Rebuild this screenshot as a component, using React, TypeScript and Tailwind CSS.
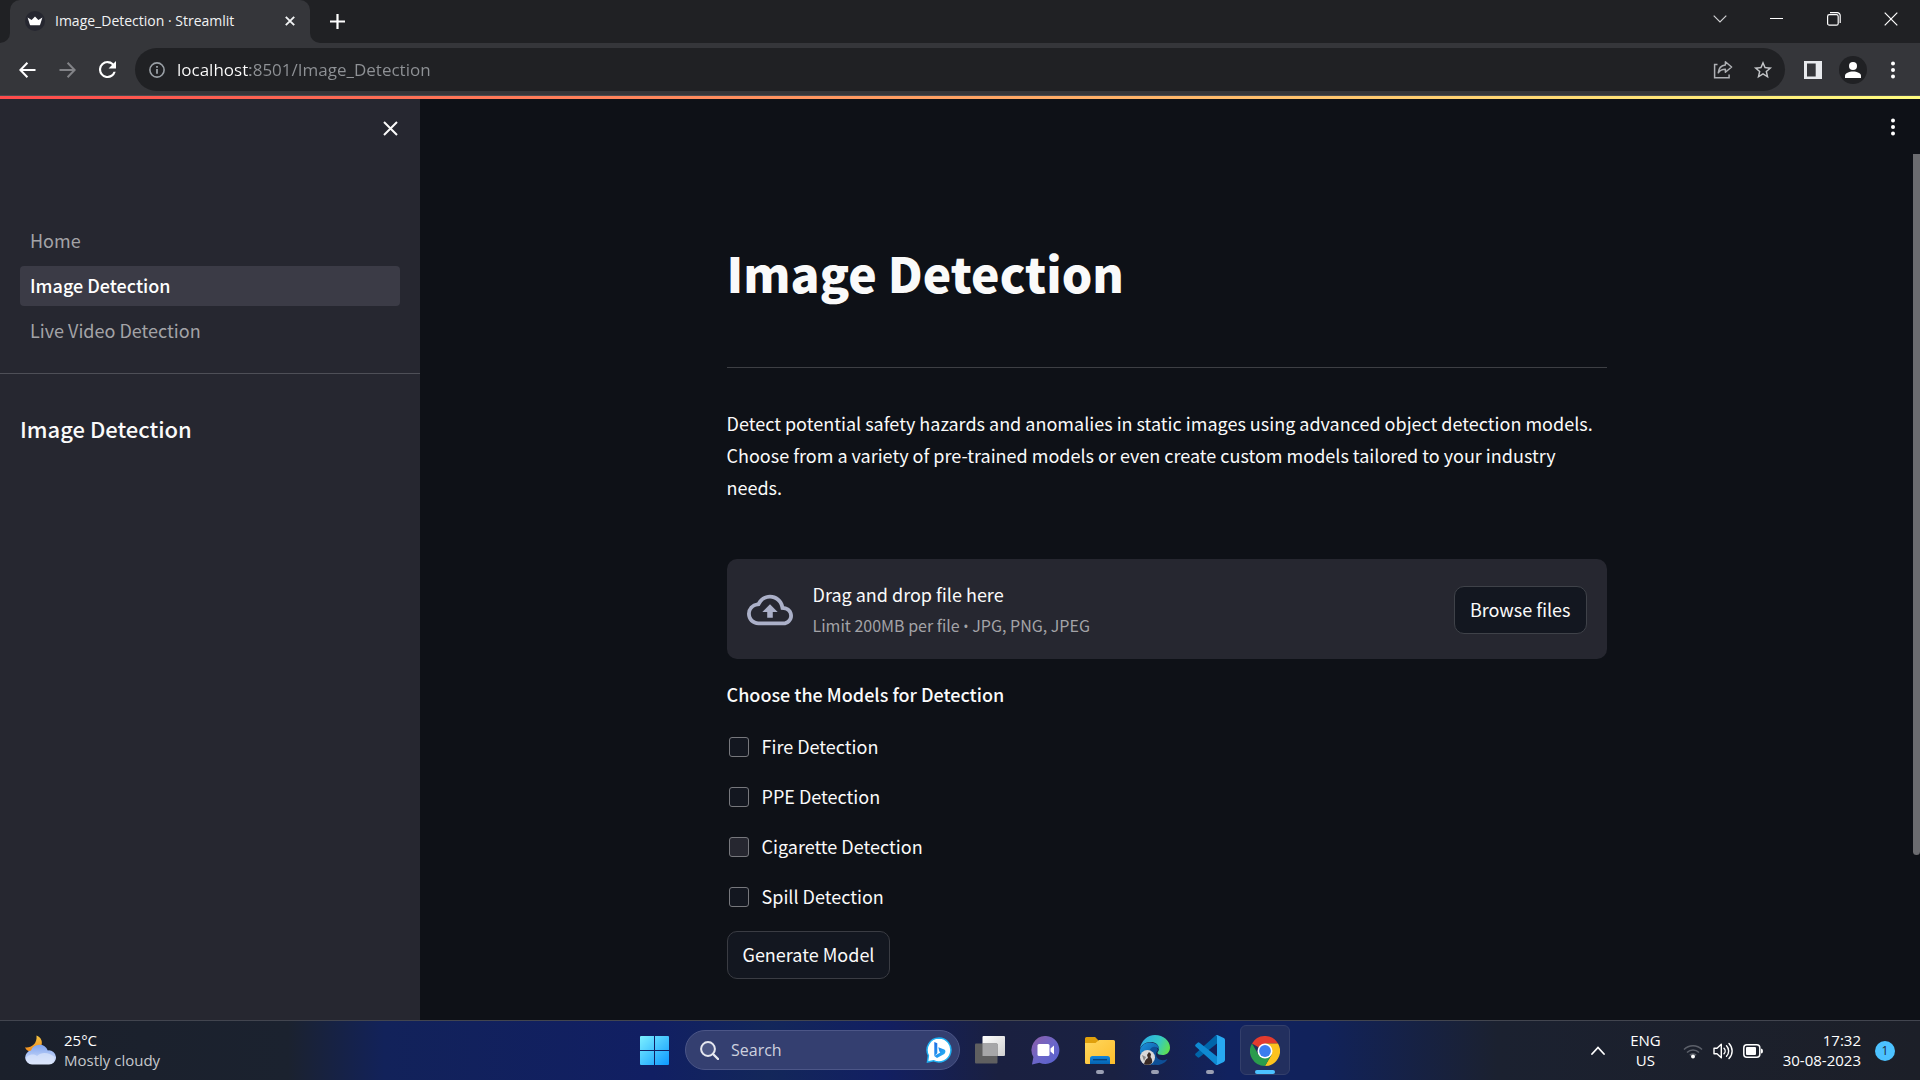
import type { ReactNode } from "react";

const PAGE_FONT = "font-['Noto_Sans_CJK_SC',sans-serif]";
const SYSTEM_FONT = "font-['Open_Sans',sans-serif]";

function Icon({ className, children, viewBox = "0 0 24 24" }: { className: string; children: ReactNode; viewBox?: string }) {
  return (
    <svg viewBox={viewBox} className={className} fill="none" aria-hidden="true">
      {children}
    </svg>
  );
}

function IconButton({ label, className, children }: { label: string; className: string; children: ReactNode }) {
  return (
    <button type="button" aria-label={label} className={`flex shrink-0 items-center justify-center ${className}`}>
      {children}
    </button>
  );
}

function DotsIcon() {
  return (
    <Icon className="h-[18px] w-1" viewBox="0 0 4 18">
      <circle cx="2" cy="2.5" r="2" fill="#fff" />
      <circle cx="2" cy="9" r="2" fill="#fff" />
      <circle cx="2" cy="15.5" r="2" fill="#fff" />
    </Icon>
  );
}

function TabStrip() {
  return (
    <header className="flex h-[43px] shrink-0 items-stretch bg-[#202124] text-[#f1f3f4]">
      <div className="flex w-[10px] items-end bg-[#35363a]">
        <div className="h-full w-full rounded-br-[10px] bg-[#202124]" />
      </div>
      <div className="bg-[#202124]">
        <div className="flex h-full w-[300px] items-center rounded-t-[10px] bg-[#35363a] pr-[10px] pb-px pl-[15px]">
          <Icon className="size-5 shrink-0" viewBox="0 0 20 20">
            <circle cx="10" cy="10" r="10" fill="#262730" />
            <path d="M2.6 6.6 6.6 9 10 5.4 13.4 9l4-2.4-2.2 6.8q-.3.9-1.2.9H6q-.9 0-1.2-.9z" fill="#fff" />
          </Icon>
          <span className="ml-[10px] flex-1 text-[14px] leading-5 whitespace-nowrap">Image_Detection · Streamlit</span>
          <IconButton label="Close tab" className="size-5">
            <Icon className="size-[10px]" viewBox="0 0 10 10">
              <path d="m.8.8 8.4 8.4m0-8.4L.8 9.2" stroke="#f1f3f4" strokeWidth="1.9" />
            </Icon>
          </IconButton>
        </div>
      </div>
      <div className="flex w-[10px] items-end bg-[#35363a]">
        <div className="h-full w-full rounded-bl-[10px] bg-[#202124]" />
      </div>
      <IconButton label="New tab" className="w-[35px]">
        <Icon className="size-[15px]" viewBox="0 0 15 15">
          <path d="M7.5 0v15M0 7.5h15" stroke="#fff" strokeWidth="2.2" />
        </Icon>
      </IconButton>
      <div className="flex-1" />
      <div className="flex h-[37px]">
        <IconButton label="Search tabs" className="w-[57px]">
          <Icon className="h-2 w-[14px]" viewBox="0 0 14 8">
            <path d="m.7.7 6.3 6.3L13.3.7" stroke="#d0d1d3" strokeWidth="1.2" />
          </Icon>
        </IconButton>
        <IconButton label="Minimize" className="w-[57px]">
          <span className="h-px w-[13px] bg-white" />
        </IconButton>
        <IconButton label="Restore" className="w-[57px]">
          <Icon className="size-[14px]" viewBox="0 0 14 14">
            <rect x=".6" y="2.6" width="10.6" height="10.6" rx="1.8" stroke="#fff" strokeWidth="1.2" />
            <path d="M3 .6h7.2a3 3 0 0 1 3 3V11" stroke="#fff" strokeWidth="1.2" />
          </Icon>
        </IconButton>
        <IconButton label="Close window" className="w-[58px]">
          <Icon className="size-[14px]" viewBox="0 0 14 14">
            <path d="m.7.7 12.6 12.6m0-12.6L.7 13.3" stroke="#fff" strokeWidth="1.2" />
          </Icon>
        </IconButton>
      </div>
    </header>
  );
}

function Toolbar() {
  return (
    <div className="flex h-[53px] shrink-0 items-center border-b border-[#4a4b4f] bg-[#35363a] pt-px pr-[7px] pl-[7px]">
      <IconButton label="Back" className="size-10">
        <Icon className="h-4 w-[17px]" viewBox="0 0 17 16">
          <path d="M16.5 8H1.6M8.4.8 1.4 8l7 7.2" stroke="#fff" strokeWidth="2" />
        </Icon>
      </IconButton>
      <IconButton label="Forward" className="size-10">
        <Icon className="h-4 w-[17px]" viewBox="0 0 17 16">
          <path d="M.5 8h14.9M8.6.8l7 7.2-7 7.2" stroke="#828387" strokeWidth="2" />
        </Icon>
      </IconButton>
      <IconButton label="Reload" className="size-10">
        <Icon className="size-[17px]" viewBox="4 4 16 16">
          <path
            d="M17.65 6.35A7.96 7.96 0 0 0 12 4a8 8 0 1 0 7.73 10h-2.08A6 6 0 1 1 12 6c1.66 0 3.14.69 4.22 1.78L13 11h7V4z"
            fill="#fff"
          />
        </Icon>
      </IconButton>
      <div className="ml-2 flex h-[43px] flex-1 items-center rounded-full bg-[#202124] pr-[2px] pl-[14px]">
        <Icon className="size-4 shrink-0" viewBox="0 0 16 16">
          <circle cx="8" cy="8" r="7.1" stroke="#9aa0a6" strokeWidth="1.6" />
          <path d="M8 7v4.8M8 4v1.8" stroke="#9aa0a6" strokeWidth="1.8" />
        </Icon>
        <input
          type="text"
          aria-label="Address"
          defaultValue="localhost:8501/Image_Detection"
          className="ml-3 min-w-0 flex-1 bg-[linear-gradient(to_right,#ffffff_73px,#8f9296_73px)] bg-clip-text text-[17px] leading-6 text-transparent outline-none"
        />
        <IconButton label="Share this page" className="size-10">
          <Icon className="size-5" viewBox="0 0 20 20">
            <path d="M4.5 4.5H1.6v13.3h14.5v-3.2" stroke="#aeb0b4" strokeWidth="1.5" />
            <path d="M12.4 1.8 18.6 7l-6.2 5.3V9.2c-3.4 0-5.6 1.2-7.1 3.6.3-4.6 2.7-7.4 7.1-7.9z" stroke="#aeb0b4" strokeWidth="1.5" strokeLinejoin="round" />
          </Icon>
        </IconButton>
        <IconButton label="Bookmark this tab" className="size-10">
          <Icon className="size-5" viewBox="1 1 22 22">
            <path
              d="m22 9.24-7.19-.62L12 2 9.19 8.63 2 9.24l5.46 4.73L5.82 21 12 17.27 18.18 21l-1.63-7.03zM12 15.4l-3.76 2.27 1-4.28-3.32-2.88 4.38-.38L12 6.1l1.71 4.04 4.38.38-3.32 2.88 1 4.28z"
              fill="#c3c5c8"
            />
          </Icon>
        </IconButton>
      </div>
      <IconButton label="Side panel" className="ml-2 size-10">
        <Icon className="size-[18px]" viewBox="0 0 18 18">
          <path d="M0 0h18v18H0zm3 2.6v12.8h8.7V2.6z" fill="#e8eaed" fillRule="evenodd" />
        </Icon>
      </IconButton>
      <IconButton label="Profile" className="size-10">
        <Icon className="size-7" viewBox="0 0 28 28">
          <circle cx="14" cy="14" r="14" fill="#202124" />
          <circle cx="14" cy="10" r="4" fill="#fff" />
          <path d="M6 22v-2.200C6 17.200 10 15.600 14 15.600s8 1.600 8 4.200V22z" fill="#fff" />
        </Icon>
      </IconButton>
      <IconButton label="Browser menu" className="size-10">
        <DotsIcon />
      </IconButton>
    </div>
  );
}

const NAV = [
  { label: "Home", active: false },
  { label: "Image Detection", active: true },
  { label: "Live Video Detection", active: false },
];

function Sidebar() {
  return (
    <aside className="w-[420px] shrink-0 bg-[#262730]">
      <div className="flex justify-end pt-[9px] pr-[10px]">
        <IconButton label="Close sidebar" className="size-10">
          <Icon className="size-[15px]" viewBox="0 0 15 15">
            <path d="m1 1 13 13M14 1 1 14" stroke="#fafafa" strokeWidth="2" />
          </Icon>
        </IconButton>
      </div>
      <nav className="mt-[73px] flex flex-col gap-[5px] border-b border-[#4e4f57] px-5 pb-[22px]">
        {NAV.map((item) => (
          <a
            key={item.label}
            href="#"
            className={
              item.active
                ? "flex h-10 items-center rounded bg-[#3b3b46] px-[10px] pb-[2px] text-[18px] leading-8 font-medium text-white"
                : "flex h-10 items-center rounded px-[10px] pb-[2px] text-[18px] leading-8 text-[#a3a3a7]"
            }
          >
            {item.label}
          </a>
        ))}
      </nav>
      <h2 className="px-5 pt-[38px] text-[22px] leading-8 font-medium text-[#fafafa]">Image Detection</h2>
    </aside>
  );
}

const MODELS = [
  { id: "fire", label: "Fire Detection", hovered: false },
  { id: "ppe", label: "PPE Detection", hovered: false },
  { id: "cigarette", label: "Cigarette Detection", hovered: true },
  { id: "spill", label: "Spill Detection", hovered: false },
];

function Main() {
  return (
    <main className="mx-auto w-full max-w-[880px] text-[18px] leading-8 text-[#fafafa]">
      <h1 className="pt-[85px] text-[48px] leading-[66px] font-black">Image Detection</h1>
      <hr className="mt-[62px] border-[#3d3f44]" />
      <p className="mt-[39px]">
        Detect potential safety hazards and anomalies in static images using advanced object detection models. Choose
        from a variety of pre-trained models or even create custom models tailored to your industry needs.
      </p>
      <section aria-label="File upload" className="mt-[56px] flex items-center rounded-[10px] bg-[#262730] px-5 pt-[19px] pb-[18px]">
        <Icon className="size-[46px] shrink-0">
          <path
            d="M19.35 10.04A7.49 7.49 0 0 0 12 4C9.11 4 6.6 5.64 5.35 8.04A5.994 5.994 0 0 0 0 14c0 3.31 2.69 6 6 6h13c2.76 0 5-2.24 5-5 0-2.64-2.05-4.78-4.65-4.96zM19 18H6c-2.21 0-4-1.79-4-4 0-2.05 1.53-3.76 3.56-3.97l1.07-.11.5-.95A5.469 5.469 0 0 1 12 6c2.62 0 4.88 1.86 5.39 4.43l.3 1.5 1.53.11A2.98 2.98 0 0 1 22 15c0 1.65-1.35 3-3 3zM8 13h2.55v3h2.9v-3H16l-4-4z"
            fill="#abb0c8"
          />
        </Icon>
        <div className="ml-5 flex-1">
          <div className="leading-8">Drag and drop file here</div>
          <div className="mt-px text-[16px] leading-7 text-[#a3a3a7]">
            Limit 200MB per file<span className={`text-[14px] ${SYSTEM_FONT}`}> • </span>JPG, PNG, JPEG
          </div>
        </div>
        <button type="button" className="h-12 rounded-[10px] border border-[#3f4249] bg-[#131720] px-[15px] pb-px">
          Browse files
        </button>
      </section>
      <fieldset>
        <legend className="pt-[19px] font-medium">Choose the Models for Detection</legend>
        <div className="mt-[21px] flex flex-col gap-[18px]">
          {MODELS.map((model) => (
            <div key={model.id} className="flex items-center">
              <input
                type="checkbox"
                id={model.id}
                className={
                  model.hovered
                    ? "ml-[2px] size-5 appearance-none rounded-[3px] border border-[#77787d] bg-[#262730] checked:bg-[#ff4b4b]"
                    : "ml-[2px] size-5 appearance-none rounded-[3px] border border-[#77787d] bg-[#131720] checked:bg-[#ff4b4b]"
                }
              />
              <label htmlFor={model.id} className="pb-[2px] pl-[13px] leading-[30px]">
                {model.label}
              </label>
            </div>
          ))}
        </div>
      </fieldset>
      <button type="button" className="mt-[18px] h-12 rounded-[10px] border border-[#3a3c43] bg-[#131720] px-[15px] pb-[2px]">
        Generate Model
      </button>
    </main>
  );
}

function WeatherIcon() {
  return (
    <Icon className="h-[30px] w-8" viewBox="0 0 32 30">
      <defs>
        <linearGradient id="moon" x1="0" y1="0" x2="0" y2="1">
          <stop offset="0" stopColor="#f5c542" />
          <stop offset="1" stopColor="#f28a1d" />
        </linearGradient>
        <linearGradient id="cloud" x1="0" y1="0" x2="0" y2="1">
          <stop offset="0" stopColor="#7fa3ee" />
          <stop offset="1" stopColor="#dfe8fc" />
        </linearGradient>
      </defs>
      <path d="M12.5.5c4.500 1.500 6.500 6 4.800 10.500C15.500 16 10 18 5 16.300 3 15.600 1.700 14 1 12.300c5 1 12.500-2.500 11.500-11.800z" fill="url(#moon)" />
      <path d="M8 29.500a7 7 0 0 1-1-13.900 9 9 0 0 1 16.800-.2A7.100 7.100 0 1 1 24.500 29.500z" fill="url(#cloud)" />
      <path d="M8 28.500c-4 0-6-2.500-6-4.500 1-4 7-6 11-3 4-4 12-4 17.500 1 0 4-2.500 6.500-6 6.500z" fill="#dbe5fb" opacity=".7" />
    </Icon>
  );
}

function StartIcon() {
  return (
    <Icon className="size-[29px]" viewBox="0 0 29 29">
      <defs>
        <linearGradient id="start" x1="0" y1="0" x2="1" y2="1">
          <stop offset="0" stopColor="#7cf0ff" />
          <stop offset="1" stopColor="#0d99ff" />
        </linearGradient>
      </defs>
      <path d="M0 1a1 1 0 0 1 1-1h13v14H0zM15 0h13a1 1 0 0 1 1 1v13H15zM0 15h14v14H1a1 1 0 0 1-1-1zM15 15h14v13a1 1 0 0 1-1 1H15z" fill="url(#start)" />
    </Icon>
  );
}

function BingIcon() {
  return (
    <Icon className="size-[26px]" viewBox="0 0 26 26">
      <defs>
        <linearGradient id="bing" x1="0" y1="0" x2="1" y2="1">
          <stop offset="0" stopColor="#1e6be6" />
          <stop offset="1" stopColor="#26b8f5" />
        </linearGradient>
      </defs>
      <path d="M13 1a12 12 0 1 1-5.500 22.700L1.500 25l.9-6.500A12 12 0 0 1 13 1z" fill="#fff" stroke="#1fb0f2" strokeWidth="1.5" />
      <path d="m8.300 5 3 1.200v10l-3 2.800zM12.300 10.200l6 2.400c1.500.7 1.500 3.200 0 4.300L11 21l-2.700-2 6-3.500-1-1.200z" fill="url(#bing)" />
    </Icon>
  );
}

function TaskViewIcon() {
  return (
    <Icon className="h-7 w-[30px]" viewBox="0 0 30 28">
      <defs>
        <linearGradient id="task" x1="0" y1="0" x2="1" y2="1">
          <stop offset="0" stopColor="#fff" />
          <stop offset="1" stopColor="#cfcfcf" />
        </linearGradient>
      </defs>
      <rect x="7.5" y="0" width="22.5" height="20" rx="1" fill="url(#task)" />
      <rect x="0" y="7.5" width="22.5" height="20" rx="1" fill="#5f5f60" />
      <path d="M7.5 7.5h14a1 1 0 0 1 1 1V20h-15z" fill="#a6a6a8" />
    </Icon>
  );
}

function ChatIcon() {
  return (
    <Icon className="size-[29px]" viewBox="0 0 29 29">
      <defs>
        <linearGradient id="chat" x1="0" y1="0" x2="1" y2="1">
          <stop offset="0" stopColor="#8f5ca6" />
          <stop offset=".5" stopColor="#6c66c8" />
          <stop offset="1" stopColor="#5560cf" />
        </linearGradient>
      </defs>
      <path d="M15 0a14 14 0 1 1-6.500 26.700L1 28.500l1.400-7.500A14 14 0 0 1 15 0z" fill="url(#chat)" />
      <rect x="6.5" y="8" width="12" height="12" rx="1.5" fill="#fff" />
      <path d="m19.500 12.500 3.500-3v9l-3.500-3z" fill="#fff" />
    </Icon>
  );
}

function ExplorerIcon() {
  return (
    <Icon className="h-[27px] w-[30px]" viewBox="0 0 30 27">
      <defs>
        <linearGradient id="folder" x1="0" y1="0" x2="1" y2="1">
          <stop offset="0" stopColor="#ffd75e" />
          <stop offset="1" stopColor="#fdbd2b" />
        </linearGradient>
        <linearGradient id="tray" x1="0" y1="0" x2="0" y2="1">
          <stop offset="0" stopColor="#1286dc" />
          <stop offset="1" stopColor="#0463b0" />
        </linearGradient>
      </defs>
      <path d="M0 1.500A1.500 1.500 0 0 1 1.500 0h8.600l3.400 3.500V12H0z" fill="#e0a00c" />
      <path d="M0 6h10.500L14 3h14.500A1.500 1.500 0 0 1 30 4.500V27H1.500A1.500 1.500 0 0 1 0 25.500z" fill="url(#folder)" />
      <path d="M5 27v-5.500A2.500 2.500 0 0 1 7.500 19h15a2.500 2.500 0 0 1 2.500 2.500V27z" fill="url(#tray)" />
      <path d="M8 22.700h14" stroke="#06437c" strokeWidth="1.4" />
    </Icon>
  );
}

function EdgeIcon() {
  return (
    <Icon className="size-[30px]" viewBox="0 0 30 30">
      <defs>
        <linearGradient id="edge-top" x1="0" y1=".3" x2="1" y2=".6">
          <stop offset="0" stopColor="#2aa9e6" />
          <stop offset=".6" stopColor="#35c9c4" />
          <stop offset="1" stopColor="#5fe04f" />
        </linearGradient>
        <linearGradient id="edge-low" x1="0" y1="0" x2="1" y2="1">
          <stop offset="0" stopColor="#1a93dd" />
          <stop offset="1" stopColor="#0d4a93" />
        </linearGradient>
      </defs>
      <path d="M15 9c-5 0-8.500 4-8.500 9.500S11 30 17 30c4.500 0 8.500-2.500 10.500-6-6 3-11.500 0-11.500-5 0-2 1-3 2-4z" fill="#0e4f96" />
      <path d="M0 15c1-5 6-8 11-7.500 5 .3 8.500 3.500 8 7-3-4.500-8-3-9.500 1C8 20 10 26 15 30 6 30-.5 23 0 15z" fill="url(#edge-low)" />
      <path d="M0 14C.8 6 7.500 0 15 0c8.500 0 15 6 15 12.500 0 5-3.500 7.500-7.500 7.500-3 0-5-1-5-2.300 0-.9 1.500-1.700 1.500-4C19 9.500 15 7 11 7 5 7 1 10.500 0 14z" fill="url(#edge-top)" />
      <circle cx="7.5" cy="22.5" r="7.5" fill="#d9d9d9" />
      <path d="M4 29c1-3 1.500-5 4-6l-1-3 2-3 2 2-.5 3c1.500 1.500 2 4 1.500 6-2 2-5.500 2.500-8 1z" fill="#3a2a25" />
      <path d="m2 20 4 2-2 4z" fill="#8a8a8a" />
    </Icon>
  );
}

function CodeIcon() {
  return (
    <Icon className="size-[30px]" viewBox="0 0 30 30">
      <path d="M22 0v8.500L4.500 22.300q-1 .7-1.900-.1L.6 20.500q-.9-1 0-2L20.500.4z" fill="#0065a9" />
      <path d="M22 30v-8.500L4.500 7.700q-1-.7-1.900.1L.6 9.500q-.9 1 0 2l19.900 18.100z" fill="#0f8ad2" />
      <path d="M20.500.4Q21.300-.3 22.300.1l6.500 3q1.200.6 1.200 1.900v20q0 1.300-1.200 1.900l-6.500 3q-1 .4-1.800-.3 1.500.4 1.500-1.400V1.800q0-1.800-1.500-1.400z" fill="#28a8f0" />
    </Icon>
  );
}

function ChromeIcon() {
  return (
    <Icon className="size-[30px]" viewBox="0 0 30 30">
      <path d="M15 15 2 7.500A15 15 0 0 1 28 7.500H15z" fill="#e33b2e" />
      <path d="M15 7.500h13A15 15 0 0 1 15 30l6.500-11.300z" fill="#fcc31e" />
      <path d="M8.500 18.700 2 7.500A15 15 0 0 0 15 30l6.500-11.300z" fill="#2a9c4c" />
      <circle cx="15" cy="15" r="7.5" fill="#fff" />
      <circle cx="15" cy="15" r="5.9" fill="#3b7def" />
    </Icon>
  );
}

const APPS = [
  { label: "Task view", icon: <TaskViewIcon />, running: false },
  { label: "Chat", icon: <ChatIcon />, running: false },
  { label: "File Explorer", icon: <ExplorerIcon />, running: true },
  { label: "Microsoft Edge", icon: <EdgeIcon />, running: true },
  { label: "Visual Studio Code", icon: <CodeIcon />, running: true },
];

function Taskbar() {
  return (
    <footer
      className={`grid h-[60px] shrink-0 grid-cols-[1fr_auto_1fr] items-stretch border-t border-[#42454f] bg-[linear-gradient(to_right,#1b202b_0%,#1b222f_15%,#12225a_20%,#111f63_34%,#13275a_40%,#121f62_46%,#1a2040_52%,#1a2142_58%,#11225f_64%,#11225a_69%,#1b2130_78%,#1c1f28_100%)] text-white ${SYSTEM_FONT}`}
    >
      <button type="button" className="flex items-center gap-2 justify-self-start pb-[2px] pl-6 text-left text-[15px] leading-5">
        <WeatherIcon />
        <span className="flex flex-col">
          <span>25°C</span>
          <span className="text-[#c6c8cc]">Mostly cloudy</span>
        </span>
      </button>
      <div className="flex items-center pb-px pl-[9px]">
        <IconButton label="Start" className="mr-4 size-[30px]">
          <StartIcon />
        </IconButton>
        <div className="mr-[5px] flex h-10 w-[275px] items-center rounded-full border border-[#4c5687] bg-[#343f70] pr-[7px] pl-[14px]">
          <Icon className="size-[19px] shrink-0" viewBox="0 0 19 19">
            <circle cx="8" cy="8" r="6.9" stroke="#e6e8f0" strokeWidth="2" fill="#4b5684" />
            <path d="m13 13 5 5" stroke="#e6e8f0" strokeWidth="2.4" strokeLinecap="round" />
          </Icon>
          <input
            type="search"
            aria-label="Search"
            placeholder="Search"
            className="ml-3 min-w-0 flex-1 bg-transparent text-[16px] leading-6 outline-none placeholder:text-[#cdd1df]"
          />
          <BingIcon />
        </div>
        <div className="flex items-center gap-[5px]">
          {APPS.map((app) => (
            <button key={app.label} type="button" aria-label={app.label} className="flex h-[50px] w-[50px] flex-col items-center">
              <span className="flex h-[45px] items-center pt-[5px]">{app.icon}</span>
              {app.running && <span className="h-1 w-2 rounded-full bg-[#9a9fb3]" />}
            </button>
          ))}
          <button
            type="button"
            aria-label="Google Chrome"
            className="flex h-[50px] w-[50px] flex-col items-center rounded-md border border-[#333f6b] bg-[#222f5e]"
          >
            <span className="flex h-[44px] items-center pt-[5px]">
              <ChromeIcon />
            </span>
            <span className="h-1 w-5 rounded-full bg-[#4cc2ff]" />
          </button>
        </div>
      </div>
      <div className="flex items-center justify-end pr-[25px] text-[15px] leading-5">
        <IconButton label="Show hidden icons" className="size-7">
          <Icon className="h-[9px] w-[14px]" viewBox="0 0 14 9">
            <path d="m1 8 6-6.500L13 8" stroke="#fff" strokeWidth="1.8" strokeLinecap="round" />
          </Icon>
        </IconButton>
        <button type="button" className="ml-[18px] flex flex-col items-center pb-[2px]">
          <span>ENG</span>
          <span>US</span>
        </button>
        <button type="button" aria-label="Network, volume and battery" className="ml-[22px] flex items-center gap-[10px]">
          <Icon className="h-4 w-5" viewBox="0 0 20 16">
            <path d="M1 6.500a12.500 12.500 0 0 1 18 0M4 9.500a8.400 8.400 0 0 1 12 0M6.800 12.200a4.700 4.700 0 0 1 6.400 0" stroke="#5c606a" strokeWidth="1.5" />
            <circle cx="10" cy="13.5" r="2" fill="#fff" />
          </Icon>
          <Icon className="h-[18px] w-5" viewBox="0 0 20 18">
            <path d="M1 6.300v5.400h3l4.300 4V2.300l-4.300 4z" stroke="#fff" strokeWidth="1.4" strokeLinejoin="round" />
            <path d="M11 6.200a4 4 0 0 1 0 5.600M13.500 3.800a7.400 7.400 0 0 1 0 10.400M16 1.400a10.800 10.800 0 0 1 0 15.200" stroke="#fff" strokeWidth="1.4" strokeLinecap="round" />
          </Icon>
          <Icon className="h-[14px] w-5" viewBox="0 0 20 14">
            <rect x=".8" y=".8" width="16" height="12.4" rx="3" stroke="#fff" strokeWidth="1.5" />
            <rect x="3" y="3" width="10" height="8" rx="1" fill="#fff" />
            <path d="M18 4.500q2 0 2 2.500t-2 2.500z" fill="#fff" />
          </Icon>
        </button>
        <button type="button" className="ml-5 flex flex-col items-end pb-[2px]">
          <span>17:32</span>
          <span>30-08-2023</span>
        </button>
        <button
          type="button"
          aria-label="1 notification"
          className="ml-[14px] flex size-5 items-center justify-center rounded-full bg-[#4cc2ff] text-[12px] leading-5 text-[#1c2a38]"
        >
          1
        </button>
      </div>
    </footer>
  );
}

export default function App() {
  return (
    <div className={`flex h-screen flex-col overflow-hidden bg-[#0e1117] ${SYSTEM_FONT}`}>
      <TabStrip />
      <Toolbar />
      <div className="h-[3px] shrink-0 bg-[linear-gradient(to_right,#ff4b4b,#ffa364_50%,#fffd80)]" />
      <div className={`flex min-h-0 flex-1 ${PAGE_FONT}`}>
        <Sidebar />
        <div className="flex min-w-0 flex-1 flex-col">
          <div className="flex h-[55px] shrink-0 items-center justify-end pr-[7px]">
            <IconButton label="App menu" className="size-10">
              <DotsIcon />
            </IconButton>
          </div>
          <div className="flex min-h-0 flex-1">
            <div className="min-w-0 flex-1">
              <Main />
            </div>
            <div className="w-[7px] shrink-0">
              <div className="h-[81%] rounded-b bg-[#6b6c70]" />
            </div>
          </div>
        </div>
      </div>
      <Taskbar />
    </div>
  );
}
